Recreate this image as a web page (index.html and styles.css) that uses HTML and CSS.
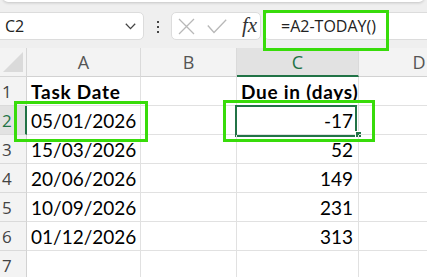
FILE: index.html
```html
<!DOCTYPE html>
<html>
<head>
<meta charset="utf-8">
<link rel="stylesheet" href="styles.css">
</head>
<body>
<div class="app">
  <div class="ribbon-edge"></div>
  <div class="fbar">
    <div class="namebox">
      <span class="ref">C2</span>
      <svg class="chev" width="11" height="7" viewBox="0 0 11 7"><path d="M0.8 0.8 L5.5 5.6 L10.2 0.8" fill="none" stroke="#444" stroke-width="1.3"/></svg>
    </div>
    <div class="dots"><i></i><i></i><i></i></div>
    <div class="fxbox">
      <svg class="ico" width="17" height="17" viewBox="0 0 17 17"><path d="M1 1 L16 16 M16 1 L1 16" stroke="#b8b8b8" stroke-width="1.3" fill="none"/></svg>
      <svg class="ico chk" width="20" height="15" viewBox="0 0 20 15"><path d="M0.8 6.5 L7 13.5 L19.2 0.8" stroke="#b8b8b8" stroke-width="1.3" fill="none"/></svg>
      <span class="fx">fx</span>
    </div>
    <div class="formula">=A2-TODAY()</div>
  </div>
  <div class="sheet">
    <div class="corner"><span class="tri"></span></div>
    <div class="ch">A</div>
    <div class="ch">B</div>
    <div class="ch sel">C</div>
    <div class="ch last">D</div>

    <div class="rh">1</div>
    <div class="cell bold">Task Date</div>
    <div class="cell"></div>
    <div class="cell bold">Due in (days)</div>
    <div class="cell"></div>

    <div class="rh sel">2</div>
    <div class="cell">05/01/2026</div>
    <div class="cell"></div>
    <div class="cell num">-17<span class="selbox"></span><span class="handle"></span></div>
    <div class="cell"></div>

    <div class="rh">3</div>
    <div class="cell">15/03/2026</div>
    <div class="cell"></div>
    <div class="cell num">52</div>
    <div class="cell"></div>

    <div class="rh">4</div>
    <div class="cell">20/06/2026</div>
    <div class="cell"></div>
    <div class="cell num">149</div>
    <div class="cell"></div>

    <div class="rh">5</div>
    <div class="cell">10/09/2026</div>
    <div class="cell"></div>
    <div class="cell num">231</div>
    <div class="cell"></div>

    <div class="rh">6</div>
    <div class="cell">01/12/2026</div>
    <div class="cell"></div>
    <div class="cell num">313</div>
    <div class="cell"></div>

    <div class="rh">7</div>
    <div class="cell"></div>
    <div class="cell"></div>
    <div class="cell"></div>
    <div class="cell"></div>
  </div>
  <div class="hl hl-formula"></div>
  <div class="hl hl-a2"></div>
  <div class="hl hl-c2"></div>
</div>
</body>
</html>
```
FILE: styles.css
```css
* { box-sizing: border-box; }
html, body { margin: 0; padding: 0; }
body { width: 427px; height: 277px; overflow: hidden; background: #fff; }
.app { position: relative; width: 427px; height: 277px; overflow: hidden; background: #efefef; }

.ribbon-edge {
  height: 6px;
  margin: -4px 3px 0 3px;
  background: #fff;
  border-radius: 0 0 5px 5px;
  box-shadow: 0 1px 3px rgba(0,0,0,0.18);
}
.fbar {
  height: 46px;
  display: flex;
  align-items: flex-start;
  padding-top: 10px;
  font-family: "Open Sans", "Noto Sans", sans-serif;
}
.namebox {
  margin-left: -6px;
  width: 150px;
  height: 28px;
  background: #fff;
  border: 1px solid #dcdcdc;
  border-radius: 5px;
  display: flex;
  align-items: center;
  justify-content: space-between;
  padding: 0 7px 0 10px;
}
.ref { font-size: 16px; color: #222; }
.chev { display: block; margin-top: 1px; }
.dots {
  width: 27px;
  display: flex;
  flex-direction: column;
  align-items: center;
  gap: 3px;
  padding-top: 9px;
}
.dots i { display: block; width: 2px; height: 2px; background: #444; }
.fxbox {
  width: 90px;
  height: 28px;
  background: #fff;
  border: 1px solid #dcdcdc;
  border-radius: 5px;
  display: flex;
  align-items: center;
  padding-left: 6px;
}
.ico { display: block; }
.chk { margin-left: 12px; margin-top: 1px; }
.fx {
  margin-left: 15px;
  font-family: "Liberation Serif", "DejaVu Serif", serif;
  font-style: italic;
  font-size: 21px;
  color: #333;
  line-height: 1;
  margin-top: -2px;
}
.formula {
  margin-left: 3px;
  flex: 1;
  height: 28px;
  background: #fff;
  border: 1px solid #dcdcdc;
  border-right: none;
  border-radius: 5px 0 0 5px;
  font-size: 16px;
  color: #222;
  padding-left: 16px;
  line-height: 26px;
}

.sheet {
  display: grid;
  grid-template-columns: 27px 114px 96px 122px 120px;
  grid-template-rows: repeat(8, 29px);
  background: #fff;
}
.corner {
  background: #f3f3f3;
  border-right: 1px solid #d6d6d6;
  border-bottom: 1px solid #d6d6d6;
  position: relative;
}
.tri {
  position: absolute;
  right: 3px;
  bottom: 4px;
  width: 0; height: 0;
  border-left: 20px solid transparent;
  border-bottom: 20px solid #dadada;
}
.ch {
  background: #f3f3f3;
  border-right: 1px solid #dadada;
  border-bottom: 1px solid #d2d2d2;
  font-family: "Open Sans", "Noto Sans", sans-serif;
  font-size: 18px;
  line-height: 1;
  color: #555;
  display: flex;
  align-items: flex-end;
  justify-content: center;
  padding-bottom: 5px;
}
.ch.sel { background: #e2e2e2; color: #217346; border-bottom: 2px solid #217346; padding-bottom: 4px; }
.ch.last { border-right: none; }
.rh {
  background: #f3f3f3;
  border-right: 1px solid #d2d2d2;
  border-bottom: 1px solid #dadada;
  font-family: "Open Sans", "Noto Sans", sans-serif;
  font-size: 17px;
  line-height: 1;
  color: #444;
  display: flex;
  align-items: flex-end;
  padding-left: 2px;
  padding-bottom: 5px;
}
.rh.sel { background: #e2e2e2; color: #217346; border-right: 2px solid #217346; }
.cell {
  border-right: 1px solid #e1e1e1;
  border-bottom: 1px solid #e1e1e1;
  font-family: "Lato", "Liberation Sans", sans-serif;
  font-size: 19px;
  line-height: 19px;
  color: #000;
  display: flex;
  align-items: flex-end;
  padding: 0 4px 4px 4px;
  white-space: nowrap;
  position: relative;
}
.bold { font-weight: 700; letter-spacing: 0.75px; }
.num { justify-content: flex-end; padding-right: 5px; }
.selbox {
  position: absolute;
  left: -2px;
  top: -1px;
  right: 1px;
  bottom: -3px;
  border: 2px solid #217346;
}
.handle {
  position: absolute;
  left: 118px;
  top: 25px;
  width: 7px;
  height: 7px;
  background: #217346;
  border: 1px solid #fff;
}
.hl { position: absolute; border: 3px solid #38dc0a; }
.hl-formula { left: 263px; top: 10px; width: 126px; height: 41px; }
.hl-a2 { left: 14px; top: 101px; width: 134px; height: 41px; }
.hl-c2 { left: 223px; top: 100px; width: 152px; height: 42px; }
```
